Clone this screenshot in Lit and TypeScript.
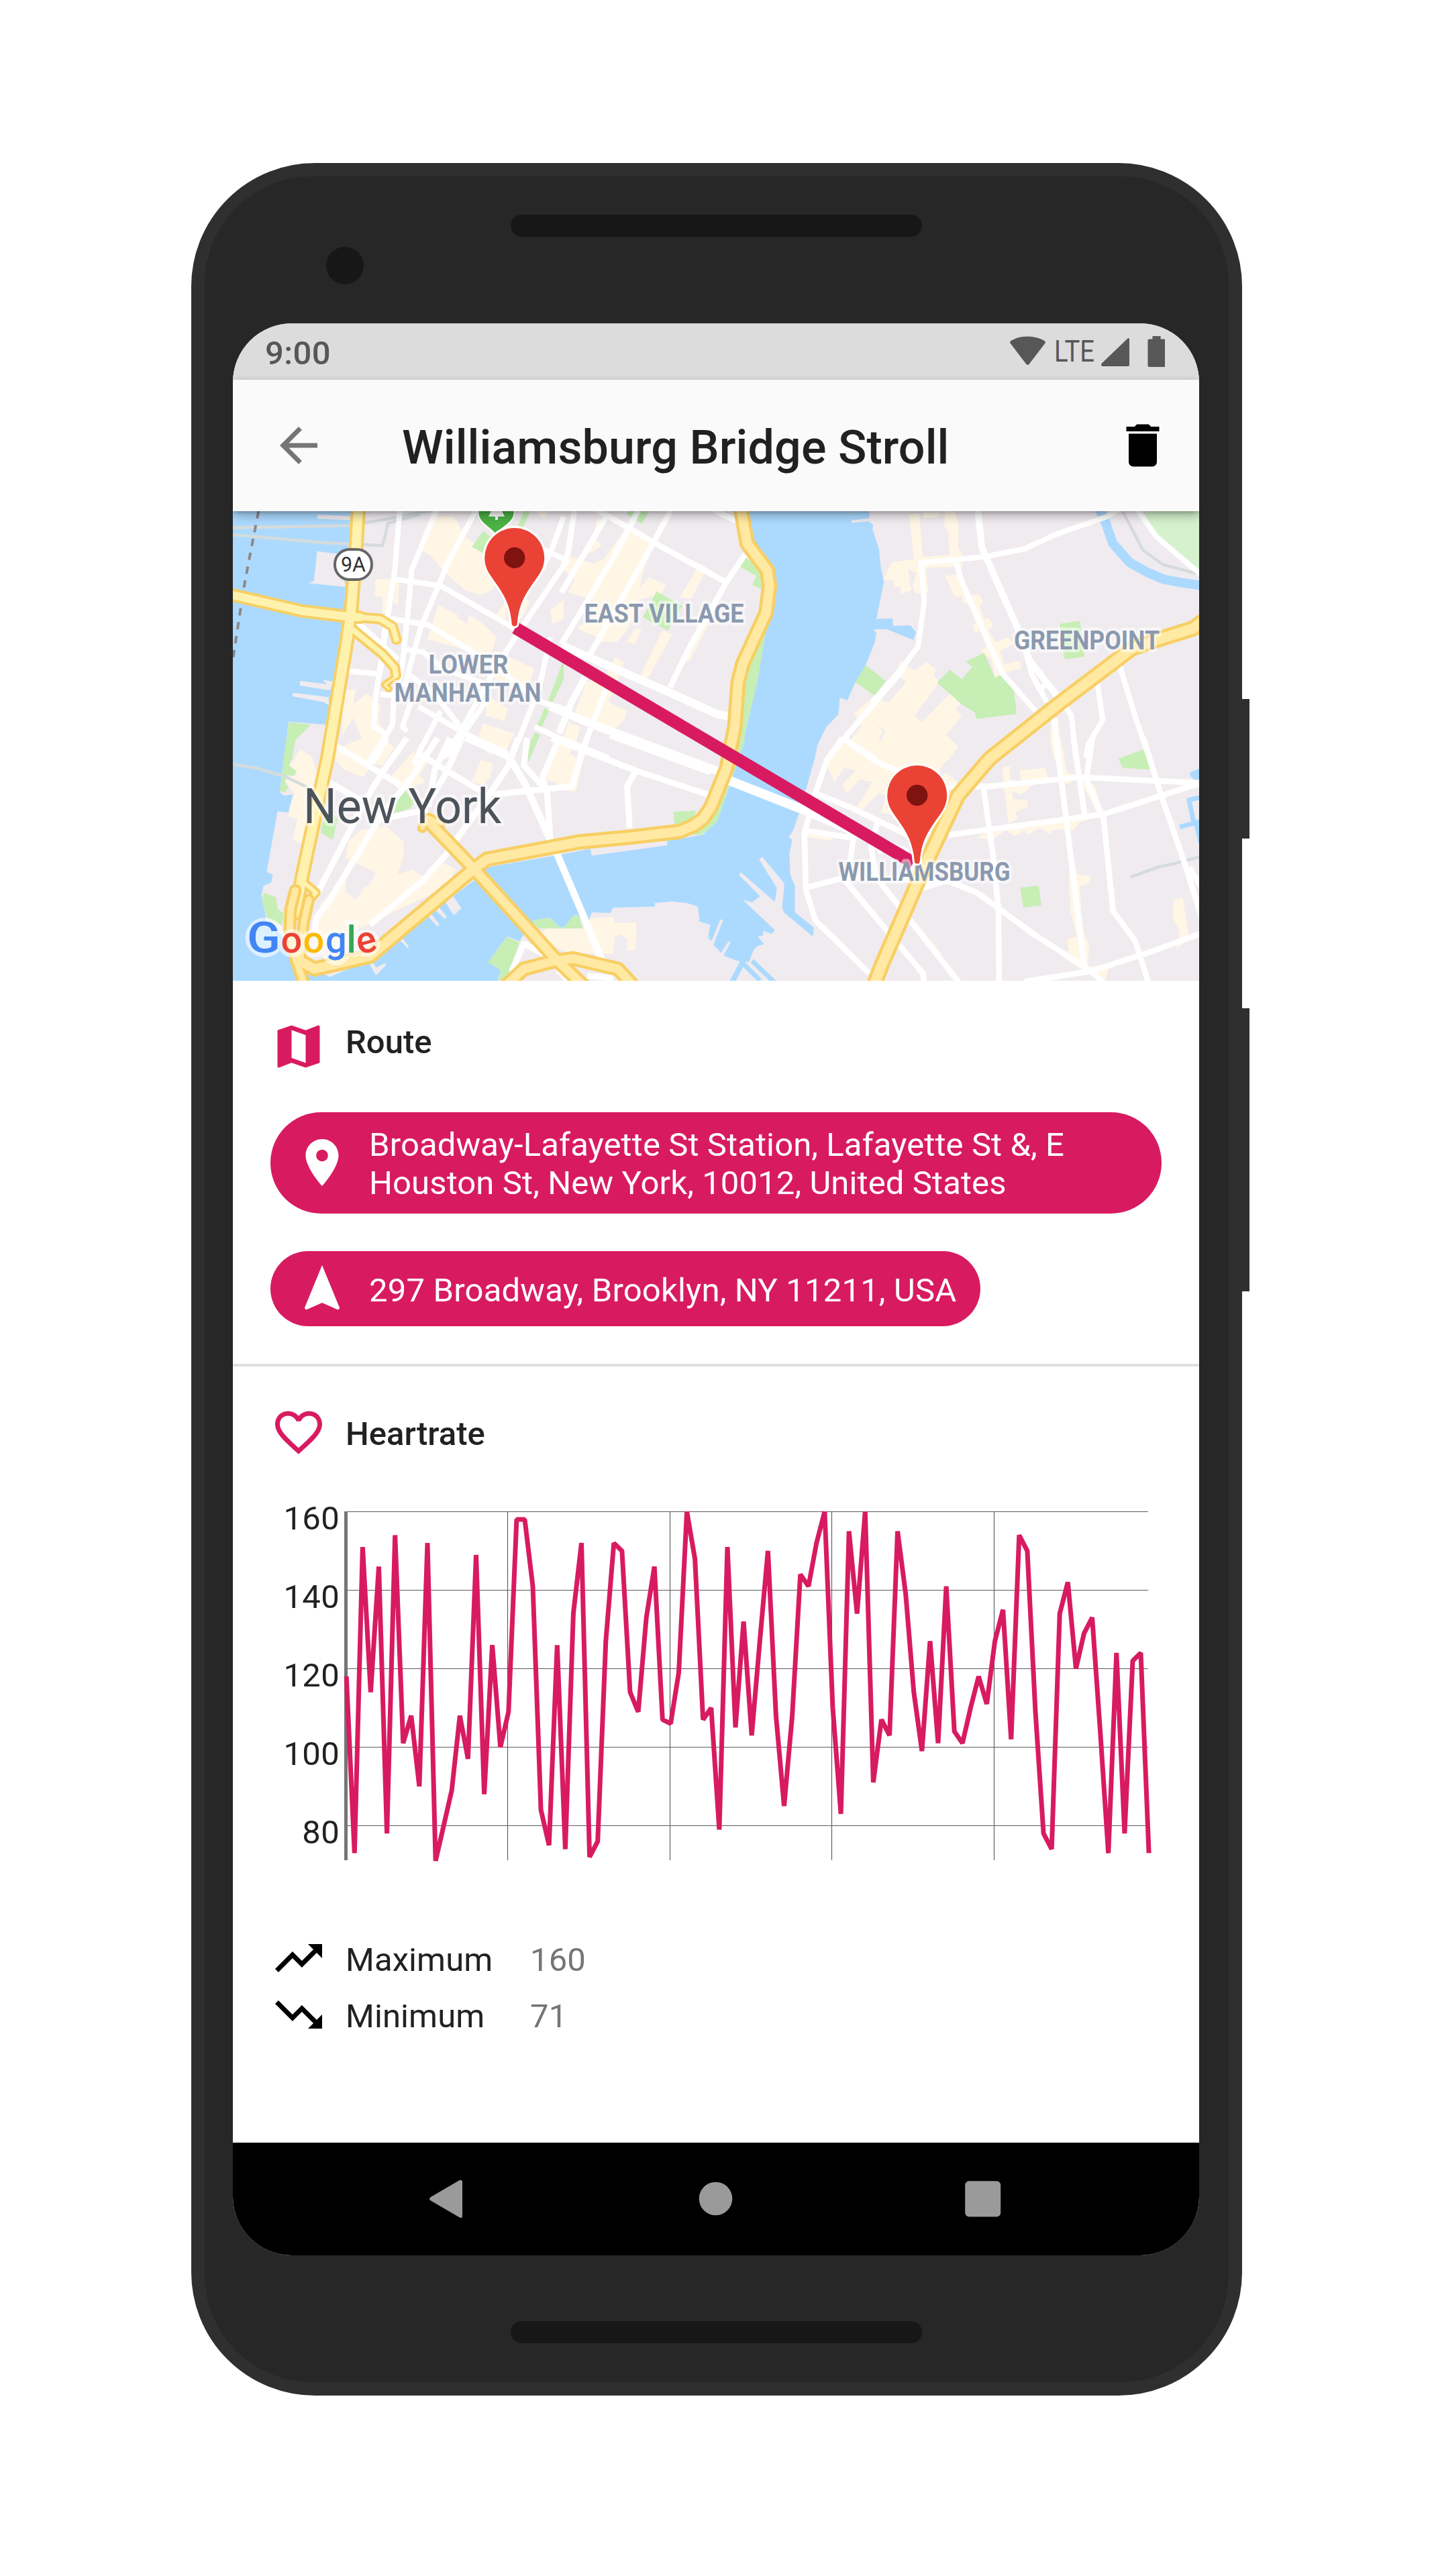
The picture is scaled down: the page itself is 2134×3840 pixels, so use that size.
import { LitElement, html, svg, css } from "lit";
import { customElement } from "lit/decorators.js";

/* ---------- Street map ---------- */

type Pts = string;

/** Turns a list of local grid points into map coordinates. */
const grid = (ox: number, oy: number, sx: number, sy: number) => (src: string): Pts =>
  src
    .trim()
    .split(/\s+/)
    .map((p) => {
      const [x, y] = p.split(",").map(Number);
      return `${(ox + x / sx).toFixed(1)},${(oy + y / sy).toFixed(1)}`;
    })
    .join(" ");

const A = grid(340, 750, 3, 3);
const B = grid(840, 750, 3, 3);
const C = grid(1300, 750, 3, 3);
const D = grid(340, 1100, 2.178, 2.904);
const E = grid(1050, 1100, 2.119, 2.904);

const LAND: Pts[] = [
  // Manhattan
  [
    A("548,20 540,200 520,460 515,540 455,900 435,990 270,978 250,1140"),
    D("175,150 168,235 180,250 210,245 195,322 160,318 125,580 145,592 140,625 115,640 108,680 125,790 170,850 200,900 220,1000 270,1025 310,1020 330,1035 390,1000 460,960 500,930 580,830 660,740 735,680 795,620 840,560 1060,510 1175,480 1180,510 1425,465 1425,445 1540,420 1568,385"),
    E("0,410 40,360 80,200 130,0"),
    B("790,1120 865,800 905,560 955,370 940,290 850,165 825,20"),
  ].join(" "),
  // Brooklyn and Queens
  [
    B("1367,20 1367,68 1285,78 1288,88 1365,82 1385,100 1380,115 1410,205 1418,290 1432,350 1398,518"),
    C("90,515 92,550 170,547 195,577 183,612 65,564"),
    B("1385,565 1398,580 1390,625 1350,725 1305,800 1268,882 1235,870 1228,945 1175,1000 1135,1080 1118,1140"),
    E("360,30 300,320 280,400 265,430 277,440 268,500 270,590 285,640 285,755 345,820 342,860 250,755 245,735 252,630 182,515 172,525 228,650 222,710 115,582 108,592 175,685 150,712 120,700 222,832 212,848 185,835 185,855 168,860 188,893 168,900 155,918 140,970 110,968 60,942 82,885 75,882 52,930 28,895 58,790 50,785 22,880 10,865 18,810 0,800"),
    D("1568,880 1560,860 1560,810 1530,795 1525,730 1490,715 1440,708 1385,715 1385,730 1250,735 1240,758 1180,755 1170,790 1130,765 1090,820 1075,820 1045,778 990,790 1000,830 960,850 945,880 905,860 845,970 885,1005 870,1070"),
    "1800,1480 1800,750",
  ].join(" "),
  // Piers
  A("400,52 545,58 545,76 398,70"),
  A("398,215 500,228 525,375 358,358 383,348"),
  A("322,795 440,810 422,790 470,798 455,838 320,815"),
  A("290,848 450,868 450,905 430,890 288,864"),
  D("640,760 652,750 686,808 680,816"),
  D("665,735 680,725 710,775 703,784"),
  D("700,700 725,675 757,738 732,768"),
  D("552,868 562,862 586,902 584,912"),
  D("455,970 468,968 480,995 508,975 512,984 480,1028"),
];

const BLOCKS: Pts[] = [
  A("925,60 1010,60 1060,150 1170,230 1210,330 1180,390 1130,410 1060,390 970,310 900,230 850,210"),
  A("660,340 745,340 720,500 690,490 690,420 655,415"),
  A("750,350 765,350 760,460 740,440"),
  A("940,455 1060,520 1080,500 1140,540 1200,600 1160,720 1080,660 890,610"),
  A("1210,480 1250,430 1240,520 1200,500"),
  A("1320,420 1350,440 1310,520 1290,480"),
  A("1190,660 1370,740 1330,850 1200,790 1170,760"),
  A("1160,860 1250,920 1235,975 1150,950"),
  A("1140,985 1280,1030 1240,1110 1160,1080 1120,1040"),
  A("510,840 570,830 560,900 620,850 680,900 670,980 720,1040 690,1110 600,1060 560,960 510,1040"),
  A("1440,480 1500,430 1500,520 1450,540"),
  A("1370,36 1430,36 1415,70"),
  B("280,110 410,170 350,320 430,350 460,370 430,410 340,430 290,560 240,620 170,620 110,670 150,600 60,560 130,500 130,430 20,400 50,340 0,300 0,230 130,270 180,250 230,180"),
  B("150,70 180,80 140,160 170,190 110,230"),
  B("610,270 640,290 570,430 520,420"),
  B("320,560 350,560 320,630 280,620"),
  B("440,570 485,585 380,780 340,780"),
  B("600,520 650,540 560,710 520,700 590,600"),
  B("230,690 270,710 240,800 200,890 285,930 270,970 230,1010 50,940 100,800 180,780"),
  B("20,980 75,1000 55,1070 0,1050"),
  C("165,50 210,45 225,240 345,230 340,130 320,100 325,36 370,36 385,100 385,200 405,230 400,290 360,285 240,290 250,400 190,405 180,365 200,310 160,300 175,390 130,405 125,375 98,375 95,345 50,345 85,265 185,250"),
  C("230,40 298,40 295,60 228,68"),
  C("325,325 390,320 430,410 480,410 495,445 480,460 500,520 525,515 540,550 520,570 550,620 610,600 630,630 570,660 590,720 660,705 665,740 620,750 550,780 530,700 485,660 510,640 480,570 460,580 445,545 465,540 430,455 400,440 405,415 370,420 345,370"),
  C("120,705 190,750 245,710 285,745 275,770 300,800 190,950 220,980 350,850 395,900 370,920 400,955 330,1035 385,1090 340,1150 -60,1150 -160,1140 -50,1000 -80,940 0,870 70,890 150,800 110,760"),
  C("800,960 830,960 850,1140 810,1140 795,1060"),
  D("235,50 270,80 300,200 275,380 240,460 210,440 225,350 195,340 215,240 180,180 225,160 200,120"),
  D("340,60 400,20 440,0 500,0 540,40 500,120 470,110 440,170 380,140 350,100"),
  D("600,60 650,100 620,160 640,190 560,230 520,180"),
  D("780,0 880,0 900,50 850,70 800,20"),
  D("820,95 860,110 850,170 830,200 790,190"),
  D("1060,0 1130,10 1110,70 1150,100 1130,230 1100,230 1060,190 1020,180"),
  D("430,400 510,380 570,450 570,510 550,590 600,570 630,600 700,540 740,570 700,650 560,740 420,830 400,900 300,900 280,850 300,720 380,600 420,540 380,520 390,450"),
  D("1180,780 1250,775 1255,800 1325,800 1325,870 1320,920 1295,920 1295,870 1270,850 1255,860 1250,935 1100,930 1010,870 1030,825 1150,825"),
  E("430,30 520,0 770,0 800,40 745,130 740,180 600,330 555,325 575,250 550,240 500,310 480,300 530,190 490,180 450,240 435,200 480,140 440,130 410,190 375,90"),
  E("760,150 800,190 770,230 745,190"),
  E("940,125 965,125 965,180 1000,190 995,140 1075,130 1085,175 1040,195 1020,225 1000,245 970,230 975,265 1020,270 1020,300 980,320 990,350 960,370 945,220"),
  E("1090,0 1125,0 1145,150 1170,160 1150,200 1125,190"),
  E("865,430 910,390 1150,340 1250,330 1180,370 1165,400 1130,395 1100,400 1090,415 1060,390 1020,420 1010,400 980,425 950,400 910,440 870,435"),
  E("1160,530 1180,590 1220,600 1215,630 1185,640 1190,760 1200,860 1215,890 1210,990 1280,980 1265,1051 1190,1000 1130,950 1150,920 1145,870 1175,860 1155,750 1150,600"),
  E("325,390 420,415 400,445 320,430"),
  E("640,780 665,795 750,935 720,930"),
  E("1480,700 1510,690 1530,860 1490,920 1500,830 1480,790"),
  E("1190,190 1230,200 1260,330 1240,330"),
];

/** Darker pockets inside the commercial blocks. */
const POCKETS: Pts[] = [
  D("385,570 420,545 480,585 455,640 440,650 415,700 380,665"),
  C("120,785 150,800 75,890 48,870"),
  C("20,990 60,1020 35,1065 30,1050 45,1020"),
  A("1020,510 1075,500 1070,540"),
  B("350,320 385,330 340,380"),
];

const PARKS: Pts[] = [
  A("1140,125 1195,165 1150,230 1090,195"),
  A("1320,36 1350,36 1310,130 1290,120"),
  A("1500,700 1500,790 1450,890 1430,885"),
  A("1415,915 1435,930 1400,1005 1380,1000"),
  A("1370,1025 1395,1035 1350,1140 1330,1140"),
  A("272,980 370,990 300,1060 285,1150 248,1140"),
  D("190,0 220,0 198,120 222,145 212,165 190,160 185,190 195,215 185,235 168,230 178,120"),
  D("575,225 605,280 590,305 535,330 550,260"),
  D("330,320 355,350 340,440 300,410 310,340"),
  D("985,0 1005,0 975,100 965,100"),
  D("115,670 155,690 160,740 180,760 175,810 130,790 110,710"),
  D("1445,320 1520,315 1500,365 1450,375"),
  D("1500,420 1540,385 1568,350 1568,385 1535,420"),
  D("990,790 1045,780 1075,820 1090,820 1120,768 1140,770 1150,825 1000,825"),
  D("905,862 945,885 900,1060 875,1060 885,1005 843,972"),
  B("415,395 530,460 465,570 355,510"),
  B("815,245 890,300 885,385 843,365 862,325 790,285"),
  B("290,36 320,36 308,62 278,50"),
  B("345,36 382,36 350,92 325,78"),
  B("905,560 865,800 790,1120 760,1110 790,900 840,700"),
  E("105,0 130,0 40,360 0,410 0,350 60,170"),
  B("1350,725 1440,795 1390,862 1305,800"),
  C("838,540 928,527 948,687 860,698"),
  C("345,745 400,788 448,732 417,708 500,670 548,782 570,768 632,835 645,943 465,965 458,935 400,900 290,803"),
  E("1307,90 1385,50 1412,138 1320,130"),
  E("997,648 1055,640 1063,725 1006,734"),
];

interface Road {
  w: number;
  p: Pts;
}

const STREETS: Road[] = [
  ...[
    "768,20 745,300 715,500 660,860 650,1000 710,1035",
    "935,20 820,300 812,400 790,620 775,760 740,860 735,990 700,1050 620,1170",
    "1115,20 985,260 940,370 860,560 810,740 790,820",
    "745,340 950,370 1280,560",
    "720,515 895,545 1180,720 1400,890 1520,925",
    "790,655 870,665 960,740 1180,820",
    "1520,250 1290,590 1200,730 1040,1020 960,1140",
    "1415,210 1520,260",
    "1500,60 1450,200 1400,300",
    "1440,600 1390,830 1270,1130",
    "800,760 920,850 1060,1030",
    "850,910 1060,1030 1250,1120",
    "530,750 680,765",
    "680,855 790,865",
    "1150,890 1060,1020 990,1140",
    "950,930 860,1100 830,1170",
    "820,880 780,1000 800,1020",
    "1370,1000 1520,1070",
    "700,560 690,700 670,800",
  ].map((s) => ({ w: 8, p: A(s) })),
  { w: 8, p: A("565,520 760,700") },
  ...[
    "130,20 290,110 410,180 720,350",
    "190,60 -10,400",
    "340,20 230,230 -10,630",
    "485,20 400,180 110,690",
    "810,230 730,350 560,650 475,825",
    "190,830 70,1140",
    "50,20 20,220 0,280",
    "-10,1055 200,1140",
    "640,15 770,80",
    "1520,740 1180,1140",
    "1250,1050 1400,1150",
  ].map((s) => ({ w: 8.5, p: B(s) })),
  { w: 12, p: B("-10,635 230,740 480,850 690,945 745,955") },
  { w: 12, p: B("-60,910 130,990 400,1090 720,1210") },
  { w: 10, p: B("110,750 30,900 -20,1030") },
  ...[
    "0,890 130,740 205,640 232,440 218,268 500,240 680,205 820,140 1050,60 1120,15",
    "370,250 400,350 580,760 730,930",
    "690,680 715,770 780,890",
    "740,840 790,800",
    "1175,15 1270,150 1470,320",
    "1105,725 1180,970 1240,1140",
    "1005,800 1030,970 965,1080 955,1140",
    "865,915 890,950 910,1140",
    "812,960 830,1140",
  ].map((s) => ({ w: 8, p: C(s) })),
  { w: 10, p: C("470,20 490,200 650,560 700,700 825,860") },
  ...[
    "345,30 560,205",
    "515,0 465,110",
    "580,0 500,150 450,260 290,670",
    "680,0 580,200 500,330 330,700 285,780 280,850",
    "720,0 670,140 650,300",
    "620,70 820,230",
    "770,0 920,90",
    "940,0 910,120 850,240 740,440",
    "740,440 710,500 630,620 460,810",
    "970,0 960,120 1035,230 1045,430",
    "1075,0 1020,170 1035,240",
    "1165,0 1115,210 860,245",
    "1050,0 1320,140 1568,250",
    "1320,150 1295,210 1303,390",
    "500,350 650,310",
    "325,190 430,270",
    "760,0 700,170 660,260",
    "1030,940 960,890 920,1010",
    "1070,1000 1110,1060",
    "1165,1030 1250,1040",
  ].map((s) => ({ w: 9, p: D(s) })),
  { w: 12, p: D("1240,-15 1568,145") },
  { w: 10.5, p: D("915,90 960,190 1045,440 1070,510 1150,760 1215,970") },
  ...[
    "435,0 385,100 350,240 315,410 320,660 350,790 520,1020",
    "435,0 545,105 640,160",
    "350,240 460,300 640,420",
    "310,400 480,435",
    "470,430 460,530 445,620 690,1020 692,1060",
    "525,460 540,600 810,1070",
    "315,650 440,605 770,620 860,670 930,740 1040,850 1220,1010 1260,1060",
    "770,210 900,210 1180,170 1568,195",
    "770,420 1100,360 1260,330 1568,195",
    "880,210 910,500 928,740 930,1060",
    "1110,0 1140,330 1200,1000",
    "1165,0 1200,330",
    "1225,0 1205,180 1260,350 1290,750 1360,880 1402,1060",
    "1385,0 1440,240 1520,560 1570,780",
    "1530,560 1570,650",
    "1010,1055 1220,1010 1400,930 1570,845",
    "545,370 530,440 560,500",
    "690,650 760,620",
  ].map((s) => ({ w: 8.5, p: E(s) })),
  { w: 14, p: E("60,175 320,315 640,500") },
];

const RAILS: Pts[] = [
  A("10,110 540,100 720,70 920,30"),
  A("10,140 400,175 690,190 715,90 860,50"),
  C("1110,20 1210,210 1300,275 1450,315"),
  D("0,110 90,130 180,165 260,215"),
  E("1345,603 1430,560 1480,545 1570,512"),
];

const CREEKS: Road[] = [
  { w: 14, p: C("1010,20 1040,80 1075,180 1150,265 1230,310 1300,340 1380,355 1480,370") },
  { w: 9, p: E("1575,140 1542,158 1560,180") },
  { w: 7, p: E("1575,255 1530,268 1545,370 1500,385") },
  { w: 9, p: E("1552,355 1568,450") },
  { w: 8, p: E("122,965 86,1060") },
  { w: 7, p: E("120,975 175,1050") },
  { w: 7, p: E("150,965 222,1060") },
];

const LIGHT_HWY: Road[] = [
  { w: 22, p: [A("582,20 572,200 550,480 530,620 445,1135"), D("240,600 232,660 215,760")].join(" ") },
  { w: 20, p: A("-10,404 330,482 530,507 590,511") },
  { w: 16, p: A("560,508 680,518 735,552 752,610") },
  { w: 16, p: A("550,560 690,675 745,735 750,770") },
  { w: 11, p: A("745,780 700,812 718,830") },
  { w: 14, p: D("240,620 285,670 265,700") },
];

const HWY: Road[] = [
  { w: 15, p: D("630,390 650,345 690,370") },
  {
    w: 23,
    p: [
      B("792,20 820,180 910,300 920,370 905,490 800,720 780,800 765,1000 745,1100"),
      E("70,130 20,300 -5,350"),
      D("1510,380 1465,405 1300,430 1140,450 840,525 790,575 460,945 280,1000 245,975"),
    ].join(" "),
  },
  { w: 22, p: D("895,1080 960,1000 1060,965 1120,955 1265,1000 1320,1080") },
  { w: 22, p: D("660,375 800,570 1065,960 1160,1080") },
  {
    w: 24,
    p: [C("1475,530 1435,560 1270,612 1160,650 830,900 540,1130"), E("900,90 800,250 700,540 560,980 535,1070")].join(" "),
  },
  { w: 18, p: D("262,700 245,800 235,960") },
  { w: 19, p: D("218,660 203,740 200,830 220,960 250,1080") },
];

const poly = (cls: string, list: Pts[]) => list.map((p) => svg`<polygon class=${cls} points=${p}></polygon>`);
const line = (cls: string, list: Road[], extra = 0) =>
  list.map((r) => svg`<polyline class=${cls} points=${r.p} stroke-width=${r.w + extra}></polyline>`);

interface Label {
  text: string;
  x: number;
  y: number;
  w: number;
  cls: string;
}

const LABELS: Label[] = [
  { text: "LOWER", x: 638.5, y: 1003.5, w: 119, cls: "area" },
  { text: "MANHATTAN", x: 587.5, y: 1045.5, w: 219, cls: "area" },
  { text: "EAST VILLAGE", x: 870.5, y: 927.5, w: 238, cls: "area" },
  { text: "GREENPOINT", x: 1511, y: 967.5, w: 217, cls: "area" },
  { text: "New York", x: 452, y: 1227, w: 295, cls: "city" },
];

/** Drawn above the route line. */
const DESTINATION: Label = { text: "WILLIAMSBURG", x: 1249.5, y: 1312.5, w: 256, cls: "area" };

const marker = (x: number, y: number) => svg`
  <g transform="translate(${x} ${y})">
    <path class="pin" d="M-4 98 C-7 62 -22 47 -36 26 C-42 17 -44.500 9 -44.500 0 A44.500 44.500 0 0 1 44.500 0 C44.500 9 42 17 36 26 C22 47 7 62 4 98 A4 4 0 0 1 -4 98Z"></path>
    <circle class="hole" r="15.700"></circle>
  </g>`;

@customElement("route-map")
export class RouteMap extends LitElement {
  static styles = css`
    :host { display: block; height: 700px; }
    svg { display: block; width: 1440px; height: 700px; font-family: Roboto, "Liberation Sans", sans-serif; }
    .land, .pocket { fill: #f0ebef; }
    .block { fill: #fff6e5; }
    .park { fill: #c6eeb5; }
    .reserve { fill: #d6f1cd; }
    polyline { fill: none; stroke-linejoin: round; }
    .street { stroke: #fff; }
    .creek { stroke: #acdaff; }
    .rail { stroke: #d5dbdc; stroke-width: 4.5px; }
    .ferry { stroke: #8d8788; stroke-width: 4px; stroke-dasharray: 11 10; }
    .case { stroke: #f8cf64; stroke-linecap: round; }
    .hwy { stroke: #ffe9a3; stroke-linecap: round; }
    .light { stroke: #fff2ae; stroke-linecap: round; }
    .area { font-size: 38.5px; font-weight: 700; fill: #8a99af; }
    .city { font-size: 73px; fill: #4c535a; }
    .area, .city { stroke: rgba(255, 255, 255, 0.5); stroke-width: 9px; paint-order: stroke; stroke-linejoin: round; }
    .route { stroke: #d81b60; stroke-width: 18.5px; }
    .pin { fill: #ea4335; stroke: #fff; stroke-width: 6px; paint-order: stroke; }
    .hole { fill: #7f1310; }
    .shield { fill: #fff; stroke: #666; stroke-width: 4px; }
    .shield-text { font-size: 31px; fill: #333; }
    .poi { fill: #4bb244; stroke: #fff; stroke-width: 4px; paint-order: stroke; }
    .tree { fill: #fff; }
    .brand { font-size: 56px; font-weight: 500; }
    .brand .big { font-size: 64px; }
    .halo { fill: #fff; opacity: 0.6; }
    .blue { fill: #4285f4; }
    .red { fill: #ea4335; }
    .amber { fill: #fbbc05; }
    .green { fill: #34a853; }
  `;

  render() {
    const label = (l: Label) =>
      svg`<text class=${l.cls} x=${l.x} y=${l.y} textLength=${l.w} lengthAdjust="spacingAndGlyphs">${l.text}</text>`;
    return html`
      <svg viewBox="347 762 1440 700" aria-label="Route map">
        <rect x="347" y="762" width="1440" height="700" fill="#acdaff"></rect>
        ${poly("land", LAND)} ${poly("block", BLOCKS)} ${poly("pocket", POCKETS)} ${poly("park", PARKS)}
        <polygon class="reserve" points=${C("1200,20 1480,20 1480,310 1300,180 1260,120")}></polygon>
        ${line("creek", CREEKS)}
        ${RAILS.map((p) => svg`<polyline class="rail" points=${p}></polyline>`)}
        <polyline class="ferry" points=${A("136,36 100,220 70,380 20,705")}></polyline>
        ${line("street", STREETS)}
        ${line("case", LIGHT_HWY)} ${line("light", LIGHT_HWY, -8)}
        ${line("case", HWY)} ${line("hwy", HWY, -9)}
        <path class="poi" d="M713.500 764a26 26 0 0 1 52 0c0 14-16 20-27 31c-10-11-25-17-25-31z"></path>
        <path class="tree" d="M740 745l12 25h-10v5h-4v-5h-10z"></path>
        <rect class="shield" x="499" y="819" width="55" height="45" rx="22"></rect>
        <text class="shield-text" x="508" y="851.500" textLength="37" lengthAdjust="spacingAndGlyphs">9A</text>
        ${LABELS.map(label)}
        <polyline class="route" points="768,936 1361,1286"></polyline>
        ${label(DESTINATION)}
        ${marker(766.7, 831.5)} ${marker(1366.7, 1185.5)}
        <g class="halo">
          <circle cx="395" cy="1397.500" r="29.500"></circle>
          <circle cx="435" cy="1406" r="21"></circle>
          <circle cx="468.500" cy="1406" r="21"></circle>
          <rect x="480" y="1385" width="42" height="54" rx="20"></rect>
          <rect x="514" y="1371" width="20" height="55" rx="3"></rect>
          <circle cx="546" cy="1406" r="20.500"></circle>
        </g>
        <text class="brand blue big" x="368" y="1420" font-size="64" textLength="50" lengthAdjust="spacingAndGlyphs"><tspan class="big">G</tspan></text>
        <text class="brand"><tspan class="red" x="418.500" y="1420">o</tspan><tspan class="amber" x="451.500" y="1420">o</tspan><tspan class="blue" x="485" y="1420">g</tspan><tspan class="green" x="516.500" y="1420">l</tspan></text>
        <text class="brand red" transform="translate(535.500 1423.500) rotate(-15)">e</text>
      </svg>
    `;
  }
}

/* ---------- Heart rate chart ---------- */

const BPM = [
  118, 73, 151, 114, 146, 78, 154, 101, 108, 90, 152, 71, 80, 89, 108, 97, 149, 88, 126, 100,
  109, 158, 158, 141, 84, 75, 126, 74, 134, 152, 72, 76, 127, 152, 150, 114, 109, 133, 146, 107,
  106, 119, 160, 148, 107, 110, 79, 151, 105, 132, 103, 127, 150, 108, 85, 108, 144, 141, 152, 160,
  110, 83, 155, 134, 160, 91, 107, 103, 155, 139, 114, 99, 127, 101, 141, 104, 101, 110, 118, 111,
  127, 135, 102, 154, 150, 109, 78, 74, 134, 142, 120, 129, 133, 104, 73, 124, 78, 122, 124, 73,
];

const X0 = 168;
const STEP = 12.08;
const Y0 = 76.4;
const UNIT = 5.85;
const yOf = (v: number) => Y0 + (160 - v) * UNIT;

/** Snaps a hairline to the pixel grid. */
const crisp = (n: number) => Math.floor(n) + 0.5;

@customElement("heart-chart")
export class HeartChart extends LitElement {
  static styles = css`
    :host { display: block; height: 700px; }
    svg { display: block; width: 1440px; height: 700px; overflow: visible; font-family: Roboto, "Liberation Sans", sans-serif; }
    .grid { stroke: #5c5c5c; stroke-width: 1.15px; }
    .axis { stroke: #757575; stroke-width: 5px; }
    .tick { font-size: 49px; fill: #212121; text-anchor: end; letter-spacing: 0.3px; }
    .trace { fill: none; stroke: #d81b60; stroke-width: 7px; stroke-linejoin: bevel; }
  `;

  render() {
    const trace = BPM.map((v, i) => `${(X0 + 1.2 + i * STEP).toFixed(1)},${yOf(v).toFixed(1)}`).join(" ");
    return html`
      <svg viewBox="0 0 1440 700" aria-label="Heart rate chart">
        ${[160, 140, 120, 100, 80].map(
          (v) => svg`
            <line class="grid" x1=${X0} x2="1364" y1=${crisp(yOf(v))} y2=${crisp(yOf(v))}></line>
            <text class="tick" x="159" y=${yOf(v) + 26.4}>${v}</text>`
        )}
        ${[20, 40, 60, 80].map((i) => {
          const x = crisp(X0 + i * STEP);
          return svg`<line class="grid" x1=${x} x2=${x} y1="76" y2="596"></line>`;
        })}
        <line class="axis" x1="168.500" x2="168.500" y1="76" y2="596"></line>
        <polyline class="trace" points=${trace}></polyline>
      </svg>
    `;
  }
}

/* ---------- Page ---------- */

const ICONS = {
  back: "M20 11H7.830l5.590-5.590L12 4l-8 8 8 8 1.410-1.410L7.830 13H20v-2z",
  trash: "M6 19c0 1.100.9 2 2 2h8c1.100 0 2-.9 2-2V7H6v12zM19 4h-3.500l-1-1h-5l-1 1H5v2h14V4z",
  map: "M20.500 3l-.16.03L15 5.100 9 3 3.360 4.900c-.21.07-.36.25-.36.48V20.500c0 .28.22.5.5.5l.16-.03L9 18.900l6 2.100 5.640-1.900c.21-.07.36-.25.36-.48V3.500c0-.28-.22-.5-.5-.5zM15 19l-6-2.110V5l6 2.110V19z",
  place: "M12 2C8.130 2 5 5.130 5 9c0 5.250 7 13 7 13s7-7.750 7-13c0-3.870-3.130-7-7-7zm0 9.500c-1.380 0-2.500-1.120-2.500-2.500s1.120-2.500 2.500-2.500 2.500 1.120 2.500 2.500-1.120 2.500-2.500 2.500z",
  navigation: "M12 2L4.500 20.290l.71.71L12 18l6.790 3 .71-.71z",
  heart:
    "M16.500 3c-1.740 0-3.410.81-4.500 2.090C10.910 3.810 9.240 3 7.500 3 4.420 3 2 5.420 2 8.500c0 3.780 3.400 6.860 8.550 11.540L12 21.350l1.450-1.320C18.600 15.360 22 12.280 22 8.500 22 5.420 19.580 3 16.500 3zm-4.400 15.550l-.1.1-.1-.1C7.140 14.240 4 11.390 4 8.500 4 6.500 5.500 5 7.500 5c1.540 0 3.040.99 3.570 2.360h1.870C13.460 5.990 14.960 5 16.500 5c2 0 3.500 1.500 3.500 3.500 0 2.890-3.140 5.740-7.900 10.050z",
  up: "M16 6l2.290 2.290-4.880 4.880-4-4L2 16.590 3.410 18l6-6 4 4 6.300-6.290L22 12V6z",
  down: "M16 18l2.290-2.290-4.880-4.880-4 4L2 7.410 3.410 6l6 6 4-4 6.300 6.290L22 12v6z",
};

const icon = (name: keyof typeof ICONS, cls = "") =>
  html`<svg class="icon ${cls}" viewBox="0 0 24 24"><path d=${ICONS[name]}></path></svg>`;

@customElement("app-root")
export class AppRoot extends LitElement {
  static styles = css`
    :host {
      display: flex;
      justify-content: center;
      box-sizing: border-box;
      width: 2134px;
      height: 3840px;
      padding-top: 243px;
      background: #fff;
      font-family: Roboto, "Liberation Sans", sans-serif;
      color: #212121;
    }
    .phone {
      position: relative;
      box-sizing: border-box;
      width: 1566px;
      height: 3328px;
      margin-left: 2px;
      border: 20px solid #2f2f2f;
      border-radius: 184px;
      background: #2f2f2f;
    }
    .key { position: absolute; right: -31px; width: 11px; background: #2f2f2f; }
    .power { top: 779px; height: 208px; }
    .volume { top: 1240px; height: 422px; }
    .body {
      height: 3288px;
      border-radius: 160px;
      background: #272727;
      display: flex;
      flex-direction: column;
      align-items: center;
    }
    .bezel { position: relative; width: 100%; height: 219px; display: flex; justify-content: center; flex: none; }
    .speaker { width: 613px; height: 33px; border-radius: 17px; background: #171717; margin-top: 57px; margin-right: 1px; }
    .speaker.low { margin-top: 98px; }
    .camera { position: absolute; left: 181px; top: 105px; width: 56px; height: 56px; border-radius: 50%; background: #171717; }
    .screen {
      width: 1440px;
      height: 2880px;
      margin-right: 2px;
      border-radius: 88px;
      overflow: hidden;
      background: #fff;
      display: flex;
      flex-direction: column;
      flex: none;
    }
    .status {
      height: 84px;
      flex: none;
      box-sizing: border-box;
      padding: 4px 51px 0 48px;
      background: #dcdcdc;
      color: #575757;
      display: flex;
      align-items: center;
      justify-content: space-between;
      font-size: 49px;
      font-weight: 500;
      line-height: 57px;
      letter-spacing: 0.4px;
    }
    .tray { display: block; width: 240px; height: 60px; margin-top: -4px; fill: #575757; letter-spacing: 0; }
    .lte { font-size: 43.5px; font-weight: 400; }
    .appbar {
      position: relative;
      z-index: 1;
      height: 196px;
      flex: none;
      box-sizing: border-box;
      padding: 0 42px 0 56px;
      display: flex;
      align-items: center;
      background: #fafafa;
      box-shadow: 0 7px 14px rgba(0, 0, 0, 0.28), 0 2px 5px rgba(0, 0, 0, 0.2);
    }
    .appbar h1 { flex: 1; margin: 0; padding: 5px 0 0 112px; font-size: 70px; font-weight: 500; line-height: 82px; letter-spacing: 0.1px; }
    .icon { display: block; width: 84px; height: 84px; flex: none; fill: #000; }
    .icon.gray { fill: #757575; }
    .icon.pink { fill: #d81b60; }
    .icon.white { fill: #fff; }
    .content { flex: 1; display: flex; flex-direction: column; }
    .head { display: flex; align-items: center; gap: 28px; font-size: 49px; line-height: 57px; }
    .head h2 { margin: 0; font-size: 49px; font-weight: 500; }
    .routes { padding: 56px 56px 56px; border-bottom: 4px solid #e0e0e0; display: flex; flex-direction: column; align-items: flex-start; }
    .routes h2 { padding-bottom: 13px; }
    .chips { display: flex; flex-direction: column; align-items: flex-start; gap: 56px; padding-top: 56px; }
    .chip {
      box-sizing: border-box;
      max-width: 1328px;
      min-height: 112px;
      padding: 18px 36px 19px 35px;
      border-radius: 76px;
      background: #d81b60;
      color: #fff;
      display: flex;
      align-items: center;
      gap: 28px;
      font-size: 49px;
      line-height: 57px;
      letter-spacing: 0.11px;
    }
    .chip.single { padding-top: 0; padding-bottom: 0; letter-spacing: 0.18px; }
    .chip span { position: relative; top: 2px; }
    .vitals { padding: 56px 0 0 56px; }
    .vitals h2 { padding-top: 5px; }
    .chart { margin-left: -56px; }
    .stat span { padding-top: 4px; letter-spacing: 0.1px; }
    .name { width: 247px; }
    .value { color: #757575; }
    .nav { height: 168px; flex: none; background: #000; }
    .nav svg { display: block; width: 1440px; height: 168px; fill: #9a9a9a; }
  `;

  render() {
    return html`
      <div class="phone">
        <div class="key power"></div>
        <div class="key volume"></div>
        <div class="body">
          <div class="bezel"><div class="speaker"></div><div class="camera"></div></div>
          <main class="screen">
            <div class="status">
              <span>9:00</span>
              <svg class="tray" viewBox="0 0 240 60">
                <path d="M35.500 50 Q33.500 50 32 47 L9.500 17.500 Q8.500 15.500 10.500 14 Q21.500 7.500 35.500 7.500 Q49.500 7.500 60.500 14 Q62.500 15.500 61.500 17.500 L39 47 Q37.500 50 35.500 50Z"></path>
                <text class="lte" x="75" y="45" textLength="60" lengthAdjust="spacingAndGlyphs">LTE</text>
                <path d="M147 52 Q143.500 51 146 47.500 L184 11 Q187 8.500 187 12 V50 Q187 52 185 52Z"></path>
                <path d="M221.500 7h12v4.500h5q2 0 2 2v37.500q0 2-2 2h-22q-2 0-2-2v-37.500q0-2 2-2h5z"></path>
              </svg>
            </div>
            <header class="appbar">
              ${icon("back", "gray")}
              <h1>Williamsburg Bridge Stroll</h1>
              ${icon("trash")}
            </header>
            <div class="content">
              <route-map></route-map>
              <section class="routes">
                <div class="head">${icon("map", "pink")}<h2>Route</h2></div>
                <div class="chips">
                  <div class="chip">
                    ${icon("place", "white")}
                    <span>Broadway-Lafayette St Station, Lafayette St &amp;, E Houston St, New York, 10012, United States</span>
                  </div>
                  <div class="chip single">${icon("navigation", "white")}<span>297 Broadway, Brooklyn, NY 11211, USA</span></div>
                </div>
              </section>
              <section class="vitals">
                <div class="head">${icon("heart", "pink")}<h2>Heartrate</h2></div>
                <heart-chart class="chart"></heart-chart>
                <div class="head stat">${icon("up")}<span class="name">Maximum</span><span class="value">160</span></div>
                <div class="head stat">${icon("down")}<span class="name">Minimum</span><span class="value">71</span></div>
              </section>
            </div>
            <nav class="nav">
              <svg viewBox="0 0 1440 168">
                <path d="M295 86.500 Q291 84 295 81 L337 56.500 Q342 54 342 59 V109 Q342 114 337 111Z"></path>
                <circle cx="719.500" cy="83.500" r="24.800"></circle>
                <rect x="1091.200" y="57.300" width="53" height="53.300" rx="6"></rect>
              </svg>
            </nav>
          </main>
          <div class="bezel"><div class="speaker low"></div></div>
        </div>
      </div>
    `;
  }
}
